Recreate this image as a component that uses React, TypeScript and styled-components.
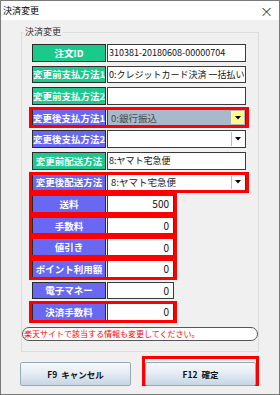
import styled, { createGlobalStyle } from "styled-components";

const GlobalStyle = createGlobalStyle`
  html, body { margin: 0; padding: 0; background: #fff; }
  body { font-family: "Noto Sans CJK JP", "Noto Sans", sans-serif; }
  * { box-sizing: border-box; }
`;

const StyledWindow = styled.div`
  width: 280px;
  height: 395px;
  background: #f0f0f0;
  border: 1px solid #7a7a7a;
  display: flex;
  flex-direction: column;
`;
const StyledTitleBar = styled.div`
  height: 19px;
  flex: none;
  background: #fff;
  display: flex;
  align-items: center;
  justify-content: space-between;
  padding: 0 6px 0 2px;
  font-size: 9px;
  color: #000;
`;
const StyledClose = styled.span`
  font-size: 13px;
  font-weight: 300;
  line-height: 1;
`;
const StyledBody = styled.div`
  flex: 1;
  padding: 6px 20px 0 20px;
`;
const StyledGroup = styled.fieldset`
  margin: 0;
  padding: 4px 0 10px 0;
  border: 1px solid #dcdcdc;
  min-width: 0;
`;
const StyledLegend = styled.legend`
  padding: 0 2px;
  margin-left: 1px;
  font-size: 9px;
  line-height: 12px;
  color: #333;
`;
const StyledRows = styled.div`
  padding-left: 7px;
  display: flex;
  flex-direction: column;
`;
const StyledRow = styled.div<{ $short?: boolean; $mark?: boolean }>`
  position: relative;
  width: ${(p) => (p.$short ? 148 : 220)}px;
  height: 21.6px;
  padding: 2px 3px;
  display: flex;
  gap: 1px;
  &::after {
    content: "";
    display: ${(p) => (p.$mark ? "block" : "none")};
    position: absolute;
    inset: 0;
    border: 3px solid #f00;
    pointer-events: none;
  }
`;
const StyledLabel = styled.div<{ $tone: "green" | "blue" }>`
  width: 74px;
  flex: none;
  background: ${(p) => (p.$tone === "green" ? "#1cc98d" : "#6868f2")};
  border: 1px solid #2a2a2a;
  color: #fff;
  font-size: 9.5px;
  font-weight: 700;
  display: flex;
  align-items: center;
  justify-content: center;
  white-space: nowrap;
  overflow: hidden;
`;
const StyledValue = styled.div<{ $num?: boolean }>`
  flex: 1;
  min-width: 0;
  background: #fff;
  border: 1px solid #3a3a3a;
  font-size: ${(p) => (p.$num ? 10 : 9)}px;
  color: #111;
  display: flex;
  align-items: center;
  justify-content: ${(p) => (p.$num ? "flex-end" : "flex-start")};
  padding: ${(p) => (p.$num ? "0 4px 0 0" : "0 0 0 1px")};
  white-space: nowrap;
  overflow: hidden;
`;
const StyledCombo = styled.div<{ $filled?: boolean }>`
  flex: 1;
  min-width: 0;
  display: flex;
  background: ${(p) => (p.$filled ? "#a9b9cc" : "#fff")};
  border: 1px solid #3a3a3a;
`;
const StyledComboText = styled.span<{ $filled?: boolean }>`
  flex: 1;
  padding-left: 3px;
  font-size: 9.5px;
  color: ${(p) => (p.$filled ? "#4a4a4a" : "#222")};
  display: flex;
  align-items: center;
  white-space: nowrap;
  overflow: hidden;
`;
const StyledComboButton = styled.span<{ $yellow?: boolean }>`
  width: 13px;
  margin: 1px;
  flex: none;
  background: ${(p) => (p.$yellow ? "#ffff88" : "#fff")};
  border-left: 1px solid ${(p) => (p.$yellow ? "#ffff88" : "#bbb")};
  display: flex;
  align-items: center;
  justify-content: center;
`;
const StyledNotice = styled.div`
  margin-top: 4px;
  height: 14px;
  border: 1px solid #555;
  border-radius: 7px;
  background: #fff;
  color: #f00;
  font-size: 8px;
  padding-left: 1px;
  display: flex;
  align-items: center;
  white-space: nowrap;
`;
const StyledButtonRow = styled.div`
  display: flex;
  gap: 8px;
  margin: 4px 0 0 -4px;
`;
const StyledButtonFrame = styled.div<{ $mark?: boolean }>`
  width: 119px;
  height: 30px;
  border: 3px solid ${(p) => (p.$mark ? "#f00" : "transparent")};
`;
const StyledButton = styled.button`
  width: 100%;
  height: 100%;
  margin: 0;
  border: 1px solid #9aa9b8;
  border-radius: 2px;
  background: linear-gradient(#f6f8fa, #e6edf3 45%, #c6d6e4);
  font-family: inherit;
  font-size: 8.5px;
  font-weight: 700;
  color: #111;
  white-space: pre;
  padding: 0;
`;

const Arrow = () => (
  <svg width="6" height="4" viewBox="0 0 6 4">
    <path d="M0 0h6L3 3.5z" fill="#000" />
  </svg>
);

type Line = {
  label: string;
  tone: "green" | "blue";
  mark?: boolean;
  kind: "text" | "combo" | "num";
  value: string;
  filled?: boolean;
};

const lines: Line[] = [
  { label: "注文ID", tone: "green", kind: "text", value: "310381-20180608-00000704" },
  { label: "変更前支払方法1", tone: "green", kind: "text", value: "0:クレジットカード決済 一括払い" },
  { label: "変更前支払方法2", tone: "green", kind: "text", value: "" },
  { label: "変更後支払方法1", tone: "blue", mark: true, kind: "combo", value: "0:銀行振込", filled: true },
  { label: "変更後支払方法2", tone: "blue", kind: "combo", value: "" },
  { label: "変更前配送方法", tone: "green", kind: "text", value: "8:ヤマト宅急便" },
  { label: "変更後配送方法", tone: "blue", mark: true, kind: "combo", value: "8:ヤマト宅急便" },
  { label: "送料", tone: "blue", mark: true, kind: "num", value: "500" },
  { label: "手数料", tone: "blue", mark: true, kind: "num", value: "0" },
  { label: "値引き", tone: "blue", mark: true, kind: "num", value: "0" },
  { label: "ポイント利用額", tone: "blue", mark: true, kind: "num", value: "0" },
  { label: "電子マネー", tone: "blue", kind: "num", value: "0" },
  { label: "決済手数料", tone: "blue", mark: true, kind: "num", value: "0" },
];

export default function App() {
  return (
    <>
      <GlobalStyle />
      <StyledWindow>
        <StyledTitleBar>
          <span>決済変更</span>
          <StyledClose>×</StyledClose>
        </StyledTitleBar>
        <StyledBody>
          <StyledGroup>
            <StyledLegend>決済変更</StyledLegend>
            <StyledRows>
              {lines.map((l) => (
                <StyledRow key={l.label} $short={l.kind === "num"} $mark={l.mark}>
                  <StyledLabel $tone={l.tone}>{l.label}</StyledLabel>
                  {l.kind === "combo" ? (
                    <StyledCombo $filled={l.filled}>
                      <StyledComboText $filled={l.filled}>{l.value}</StyledComboText>
                      <StyledComboButton $yellow={l.filled}>
                        <Arrow />
                      </StyledComboButton>
                    </StyledCombo>
                  ) : (
                    <StyledValue $num={l.kind === "num"}>{l.value}</StyledValue>
                  )}
                </StyledRow>
              ))}
            </StyledRows>
            <StyledNotice>楽天サイトで該当する情報も変更してください。</StyledNotice>
          </StyledGroup>
          <StyledButtonRow>
            <StyledButtonFrame>
              <StyledButton>{"F9  キャンセル"}</StyledButton>
            </StyledButtonFrame>
            <StyledButtonFrame $mark>
              <StyledButton>{"F12  確定"}</StyledButton>
            </StyledButtonFrame>
          </StyledButtonRow>
        </StyledBody>
      </StyledWindow>
    </>
  );
}
